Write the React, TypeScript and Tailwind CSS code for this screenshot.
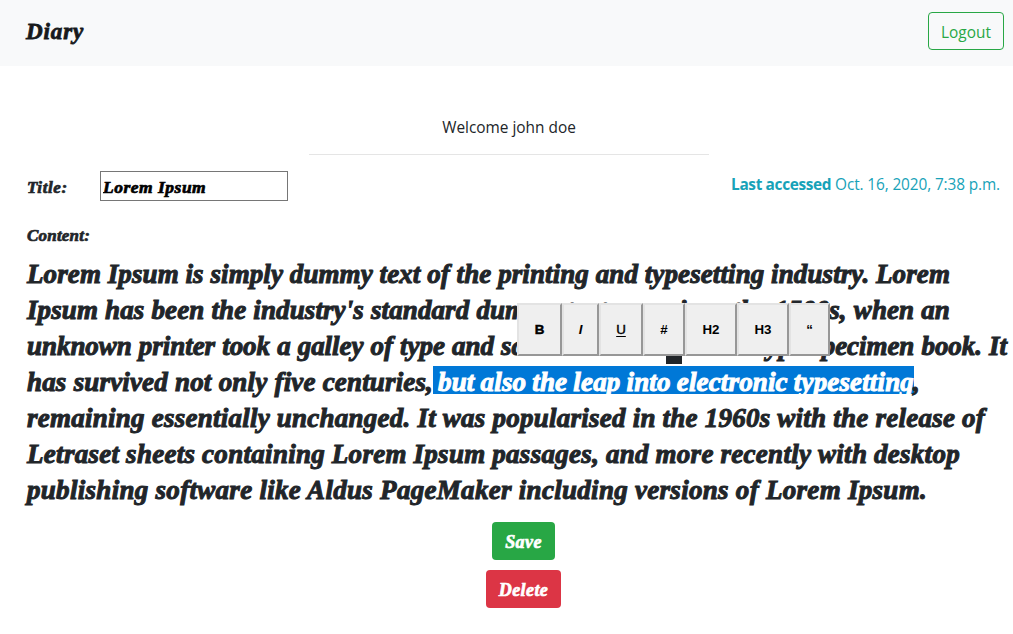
import React from "react";

const swash =
  "font-['Liberation_Serif',serif] font-bold italic";

const line = "block h-9 whitespace-nowrap [text-align-last:justify]";

const tools = [
  { label: "B", style: "w-[45px] [-webkit-text-stroke:0.5px_currentColor]" },
  { label: "I", style: "w-[37px] italic" },
  { label: "U", style: "w-[44px] font-normal underline underline-offset-2 [-webkit-text-stroke:0.4px_currentColor]" },
  { label: "#", style: "w-[42px]" },
  { label: "H2", style: "w-[52px]" },
  { label: "H3", style: "w-[52px]" },
  { label: "“", style: "w-[41px]" },
];

function Toolbar() {
  return (
    <div className="absolute left-[490px] top-[47px] flex flex-col items-center [word-spacing:0] not-italic [-webkit-text-stroke:0px]">
      <div className="flex h-[53px] font-['Liberation_Sans',sans-serif] text-[13.33px] font-bold text-black">
        {tools.map((t) => (
          <button
            key={t.label}
            className={`${t.style} h-[53px] border-2 border-t-[#e3e3e3] border-l-[#e3e3e3] border-r-[#979797] border-b-[#979797] bg-[#efefef]`}
          >
            {t.label}
          </button>
        ))}
      </div>
      <div className="h-2 w-4 bg-[#212529]" />
    </div>
  );
}

export default function App() {
  return (
    <div className="h-[634px] w-[1013px] overflow-hidden bg-white font-['Open_Sans',sans-serif] text-[15.4px] text-[#212529]">
      <nav className="flex h-[66px] items-center justify-between bg-[#f8f9fa] pr-[9px] pl-[26px] pb-1">
        <span className={`${swash} pt-[3px] text-[23px] tracking-[0.9px] text-[#17191c] [-webkit-text-stroke:0.8px_currentColor]`}>
          Diary
        </span>
        <button className="h-[38px] w-[76px] rounded border border-[#28a745] pt-1 text-[#28a745]">
          Logout
        </button>
      </nav>

      <header className="mt-[49px] ml-[309px] flex h-10 w-[400px] justify-center border-b border-[#e5e5e5]">
        <span className="leading-[25px]">Welcome john doe</span>
      </header>

      <main className="pl-[27px]">
        <div className="mt-4 flex h-[30px] pr-[13px]">
          <label className={`${swash} w-[73px] pt-[5px] text-[17px] leading-6 tracking-[0.6px] [-webkit-text-stroke:0.7px_currentColor]`}>
            Title:
          </label>
          <input
            className={`${swash} h-[30px] w-[188px] border border-[#767676] px-0.5 pt-[3px] text-[17.5px] tracking-[0.5px] text-black [-webkit-text-stroke:0.7px_currentColor]`}
            defaultValue="Lorem Ipsum"
          />
          <p className="ml-auto pt-[2px] leading-6 tracking-[-0.12px] text-[#17a2b8]">
            <b className="tracking-[-0.35px]">Last accessed</b> Oct. 16, 2020, 7:38 p.m.
          </p>
        </div>
        <div className={`${swash} mt-[23px] h-8 text-[17px] leading-6 tracking-[0.2px] [-webkit-text-stroke:0.7px_currentColor]`}>
          Content:
        </div>

        <div className={`${swash} relative text-[27px] leading-9 [word-spacing:-3px] [-webkit-text-stroke:1px_currentColor]`}>
          <span className={`${line} w-[923px] tracking-[0.1px]`}>
            Lorem Ipsum is simply dummy text of the printing and typesetting industry. Lorem
          </span>
          <span className={`${line} w-[923px] tracking-[0.1px]`}>
            Ipsum has been the industry's standard dummy text ever since the 1500s, when an
          </span>
          <span className={`${line} w-[980px] tracking-[-0.05px]`}>
            unknown printer took a galley of type and scrambled it to make a type specimen book. It
          </span>
          <span className="flex h-9 items-start whitespace-nowrap">
            <span className="w-[406px] tracking-[0.15px] [text-align-last:justify]">
              has survived not only five centuries,
            </span>
            <span className="mt-0.5 h-7 w-[481px] bg-[#0078d7] pl-[5px] leading-8 tracking-[0.15px] text-white [text-align-last:justify]">
              but also the leap into electronic typesetting
            </span>
            <span className="-ml-px">,</span>
          </span>
          <span className={`${line} w-[958px] tracking-[0.25px]`}>
            remaining essentially unchanged. It was popularised in the 1960s with the release of
          </span>
          <span className={`${line} w-[933px] tracking-[0.3px]`}>
            Letraset sheets containing Lorem Ipsum passages, and more recently with desktop
          </span>
          <span className={`${line} w-[900px] tracking-[0.3px]`}>
            publishing software like Aldus PageMaker including versions of Lorem Ipsum.
          </span>
          <Toolbar />
        </div>

        <div className={`${swash} mt-[14px] flex w-[993px] flex-col items-center gap-2.5 text-[18px] tracking-[0.4px] text-white [-webkit-text-stroke:0.7px_currentColor]`}>
          <button className="h-[38px] w-[63px] rounded bg-[#28a745] pt-[3px]">Save</button>
          <button className="h-[38px] w-[75px] rounded bg-[#dc3545] pt-[3px]">Delete</button>
        </div>
      </main>
    </div>
  );
}
